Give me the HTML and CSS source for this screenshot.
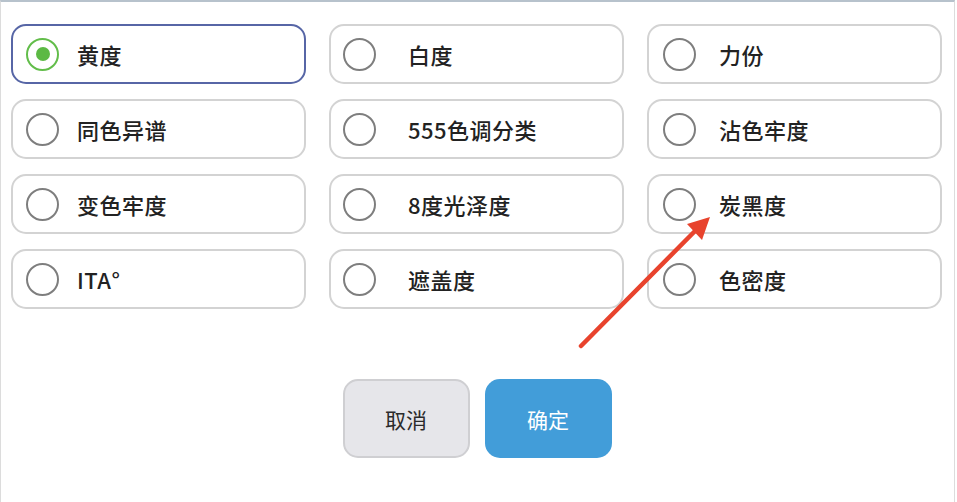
FILE: index.html
```html
<!DOCTYPE html>
<html lang="zh">
<head>
<meta charset="utf-8">
<link rel="stylesheet" href="styles.css">
</head>
<body>
<div class="panel">
  <div class="grid">
    <div class="opt selected c1"><span class="radio"></span><span class="label">黄度</span></div>
    <div class="opt c2"><span class="radio"></span><span class="label">白度</span></div>
    <div class="opt c3"><span class="radio"></span><span class="label">力份</span></div>
    <div class="opt c1"><span class="radio"></span><span class="label">同色异谱</span></div>
    <div class="opt c2"><span class="radio"></span><span class="label">555色调分类</span></div>
    <div class="opt c3"><span class="radio"></span><span class="label">沾色牢度</span></div>
    <div class="opt c1"><span class="radio"></span><span class="label">变色牢度</span></div>
    <div class="opt c2"><span class="radio"></span><span class="label">8度光泽度</span></div>
    <div class="opt c3"><span class="radio"></span><span class="label">炭黑度</span></div>
    <div class="opt c1"><span class="radio"></span><span class="label">ITA°</span></div>
    <div class="opt c2"><span class="radio"></span><span class="label">遮盖度</span></div>
    <div class="opt c3"><span class="radio"></span><span class="label">色密度</span></div>
  </div>
  <div class="actions">
    <button class="btn cancel">取消</button>
    <button class="btn ok">确定</button>
  </div>
  <svg class="arrow" width="957" height="502" viewBox="0 0 957 502">
    <line x1="581" y1="346" x2="698" y2="228" stroke="#e8432d" stroke-width="4.5" stroke-linecap="round"/>
    <polygon points="710,217 687,224 702,240" fill="#e8432d"/>
  </svg>
</div>
</body>
</html>
```
FILE: styles.css
```css
html, body {
  margin: 0;
  padding: 0;
  background: #ffffff;
}
.panel {
  position: relative;
  width: 953px;
  height: 500px;
  border-top: 2px solid #b7c2cc;
  border-left: 1px solid #dcdcdc;
  border-right: 1px solid #dcdcdc;
  font-family: "Noto Sans CJK SC", "Noto Sans", sans-serif;
  color: #222222;
}
.grid {
  display: grid;
  grid-template-columns: repeat(3, 295px);
  grid-auto-rows: 60px;
  column-gap: 23px;
  row-gap: 15px;
  padding: 22px 0 0 10px;
}
.opt {
  display: flex;
  align-items: center;
  box-sizing: border-box;
  border: 2px solid #d3d3d3;
  border-radius: 15px;
  background: #fff;
}
.opt.selected {
  border-color: #5766a6;
}
.radio {
  box-sizing: border-box;
  width: 33px;
  height: 33px;
  border: 2px solid #7e7e7e;
  border-radius: 50%;
  flex: none;
  display: flex;
  align-items: center;
  justify-content: center;
}
.selected .radio {
  border-color: #62bd4a;
}
.selected .radio::after {
  content: "";
  width: 14px;
  height: 14px;
  border-radius: 50%;
  background: #5cb944;
}
.c1 .radio { margin-left: 13px; }
.c1 .label { margin-left: 18px; }
.c2 .radio { margin-left: 12px; }
.c2 .label { margin-left: 32px; }
.c3 .radio { margin-left: 14px; }
.c3 .label { margin-left: 23px; }
.label {
  font-size: 22px;
  font-weight: 500;
  line-height: 1;
  letter-spacing: 0.5px;
  padding-bottom: 1px;
}
.actions {
  display: flex;
  justify-content: center;
  gap: 15px;
  margin-top: 70px;
  padding-right: 1px;
}
.btn {
  box-sizing: border-box;
  width: 127px;
  height: 79px;
  border-radius: 15px;
  font-family: "Noto Sans CJK SC", "Noto Sans", sans-serif;
  font-size: 21px;
  padding: 0;
}
.cancel {
  background: #e6e6ea;
  border: 2px solid #cfcfd2;
  color: #2b2b2b;
}
.ok {
  background: #429dd9;
  border: none;
  color: #ffffff;
}
.arrow {
  position: absolute;
  left: -1px;
  top: -2px;
  pointer-events: none;
}
```
